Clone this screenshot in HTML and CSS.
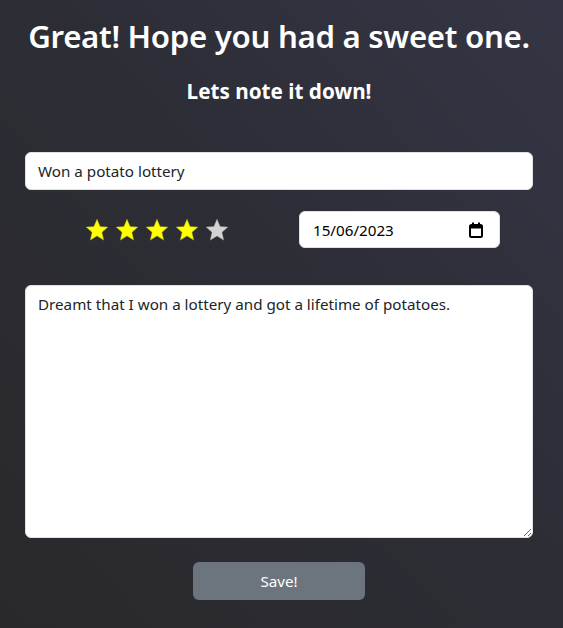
FILE: index.html
```html
<!DOCTYPE html>
<html lang="en">
<head>
<meta charset="utf-8">
<title>Dream journal</title>
<link rel="stylesheet" href="styles.css">
</head>
<body>
<main class="page">
  <h1 class="title">Great! Hope you had a sweet one.</h1>
  <h4 class="subtitle">Lets note it down!</h4>
  <input class="field" type="text" value="Won a potato lottery">
  <div class="row">
    <div class="stars">
      <svg class="star on" viewBox="0 0 24 24"><polygon points="12,1 15.1,8.4 23,9.1 17,14.3 18.8,22.2 12,18 5.2,22.2 7,14.3 1,9.1 8.9,8.4"/></svg>
      <svg class="star on" viewBox="0 0 24 24"><polygon points="12,1 15.1,8.4 23,9.1 17,14.3 18.8,22.2 12,18 5.2,22.2 7,14.3 1,9.1 8.9,8.4"/></svg>
      <svg class="star on" viewBox="0 0 24 24"><polygon points="12,1 15.1,8.4 23,9.1 17,14.3 18.8,22.2 12,18 5.2,22.2 7,14.3 1,9.1 8.9,8.4"/></svg>
      <svg class="star on" viewBox="0 0 24 24"><polygon points="12,1 15.1,8.4 23,9.1 17,14.3 18.8,22.2 12,18 5.2,22.2 7,14.3 1,9.1 8.9,8.4"/></svg>
      <svg class="star off" viewBox="0 0 24 24"><polygon points="12,1 15.1,8.4 23,9.1 17,14.3 18.8,22.2 12,18 5.2,22.2 7,14.3 1,9.1 8.9,8.4"/></svg>
    </div>
    <div class="date-col">
      <div class="date">
        <span class="date-text">15/06/2023</span>
        <svg class="cal" viewBox="0 0 14 16">
          <rect x="1" y="3" width="12" height="12" rx="1.5" fill="none" stroke="#000" stroke-width="2"/>
          <rect x="1" y="3" width="12" height="3.5" fill="#000"/>
          <rect x="3" y="0.5" width="2" height="3" fill="#000"/>
          <rect x="9" y="0.5" width="2" height="3" fill="#000"/>
        </svg>
      </div>
    </div>
  </div>
  <textarea class="field area">Dreamt that I won a lottery and got a lifetime of potatoes.</textarea>
  <div class="actions">
    <button class="save" type="button">Save!</button>
  </div>
</main>
</body>
</html>
```
FILE: styles.css
```css
html, body {
  margin: 0;
  padding: 0;
}
body {
  min-height: 628px;
  background: linear-gradient(to bottom left, #343645 0%, #2d2d36 45%, #29292c 100%);
  font-family: "Noto Sans", "Open Sans", sans-serif;
  color: #212529;
}
.page {
  display: flex;
  flex-direction: column;
  padding: 0 30px 0 25px;
}
.title {
  margin: 16px 0 0;
  color: #fff;
  font-size: 31.2px;
  font-weight: 600;
  line-height: 40px;
  text-align: center;
  letter-spacing: -0.3px;
  white-space: nowrap;
}
.subtitle {
  margin: 20px 0 0;
  color: #fff;
  font-size: 20.7px;
  font-weight: 700;
  line-height: 30px;
  text-align: center;
}
.field {
  display: block;
  box-sizing: border-box;
  width: 100%;
  margin: 0;
  border: 1px solid #dee2e6;
  border-radius: 6px;
  background: #fff;
  color: #212529;
  font-family: inherit;
  font-size: 15.2px;
  line-height: 24px;
  padding: 6px 12px;
  outline: none;
}
input.field {
  margin-top: 46px;
  height: 38px;
}
.row {
  display: grid;
  grid-template-columns: 1fr 1fr;
  margin-top: 21px;
  height: 37px;
}
.stars {
  display: flex;
  align-items: center;
  justify-content: center;
  gap: 6px;
  padding-left: 9px;
}
.star {
  width: 24px;
  height: 24px;
}
.star.on polygon {
  fill: #ffff00;
  stroke: #8a8a30;
  stroke-width: 0.4;
}
.star.off polygon {
  fill: #d3d3d3;
  stroke: #8c8c8c;
  stroke-width: 0.4;
}
.date-col {
  padding-left: 20px;
}
.date {
  box-sizing: border-box;
  width: 201px;
  height: 37px;
  display: flex;
  align-items: center;
  justify-content: space-between;
  padding: 0 16px 0 13px;
  border: 1px solid #dee2e6;
  border-radius: 6px;
  background: #fff;
}
.date-text {
  font-size: 15.2px;
  color: #000;
}
.cal {
  width: 14px;
  height: 16px;
}
.area {
  margin-top: 37px;
  height: 253px;
  resize: vertical;
}
.actions {
  display: flex;
  justify-content: center;
  margin-top: 24px;
}
.save {
  width: 172px;
  height: 38px;
  border: 0;
  border-radius: 6px;
  background: #6c757d;
  color: #fff;
  font-family: inherit;
  font-size: 15.2px;
  cursor: pointer;
}
```
